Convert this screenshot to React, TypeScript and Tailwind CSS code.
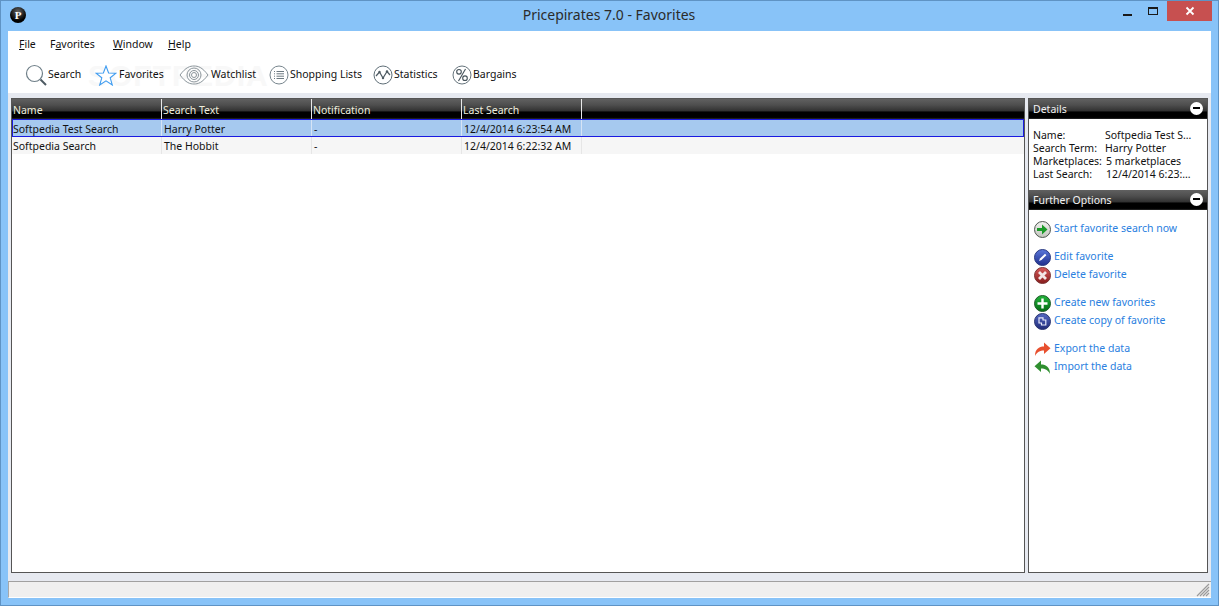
import type { ReactNode } from "react";

const font = "font-['Noto_Sans','Liberation_Sans',sans-serif]";

const headerBg = "bg-[linear-gradient(to_bottom,#606060_0%,#4e4e4e_30%,#333_58%,#000_66%,#000_92%,#2a2a2a_100%)]";

const columns = [
  { name: "Name", w: "w-[150px]" },
  { name: "Search Text", w: "w-[150px]" },
  { name: "Notification", w: "w-[150px]" },
  { name: "Last Search", w: "w-[120px]" },
];

const rows = [
  ["Softpedia Test Search", "Harry Potter", "-", "12/4/2014 6:23:54 AM"],
  ["Softpedia Search", "The Hobbit", "-", "12/4/2014 6:22:32 AM"],
];

const details = [
  ["Name:", "Softpedia Test Search", "w-[72px]", "w-[92px]"],
  ["Search Term:", "Harry Potter", "w-[72px]", "w-[92px]"],
  ["Marketplaces:", "5 marketplaces", "w-[73px]", "w-[92px]"],
  ["Last Search:", "12/4/2014 6:23:54 AM", "w-[73px]", "w-[89px]"],
];

function SearchIcon() {
  return (
    <svg width="22" height="23" viewBox="0 0 22 23" fill="none">
      <circle cx="9.5" cy="9.5" r="8" stroke="#6f7f88" strokeWidth="1.2" fill="#fff" />
      <path d="M15.5 15.5 L21 21" stroke="#4d5a62" strokeWidth="2" />
    </svg>
  );
}

function StarIcon() {
  return (
    <svg width="22" height="21" viewBox="0 0 22 21" fill="none">
      <path d="M11 1 L13.6 8 L21 8.2 L15.2 12.8 L17.3 20 L11 15.8 L4.7 20 L6.8 12.8 L1 8.2 L8.4 8 Z" stroke="#3f9cf0" strokeWidth="1.1" fill="#fff" />
    </svg>
  );
}

function EyeIcon() {
  return (
    <svg width="30" height="20" viewBox="0 0 30 20" fill="none">
      <path d="M1 10 C7 2 11 1 15 1 C19 1 23 2 29 10 C23 18 19 19 15 19 C11 19 7 18 1 10 Z" stroke="#8b959b" strokeWidth="1" />
      <circle cx="15" cy="10" r="7" stroke="#8b959b" strokeWidth="1" />
      <circle cx="15" cy="10" r="4.5" stroke="#8b959b" strokeWidth="1" />
      <circle cx="15" cy="10" r="2.5" stroke="#8b959b" strokeWidth="1" />
    </svg>
  );
}

function ListIcon() {
  return (
    <svg width="20" height="20" viewBox="0 0 20 20" fill="none">
      <circle cx="10" cy="10" r="9" stroke="#77858d" strokeWidth="1" />
      <path d="M7.5 6.5 H15 M7.5 8.8 H15 M7.5 11.2 H15 M7.5 13.5 H15" stroke="#6d7a82" strokeWidth="1" />
      <path d="M5 6.5 H6 M5 8.8 H6 M5 11.2 H6 M5 13.5 H6" stroke="#6d7a82" strokeWidth="1" />
    </svg>
  );
}

function StatsIcon() {
  return (
    <svg width="20" height="20" viewBox="0 0 20 20" fill="none">
      <circle cx="10" cy="10" r="9" stroke="#5f6e77" strokeWidth="1" />
      <path d="M3 11 L6.5 7 L10 13 L14 6.5 L17 10" stroke="#4d5a62" strokeWidth="1.2" />
      <circle cx="6.5" cy="7" r="1.2" fill="#4d5a62" />
      <circle cx="10" cy="13" r="1.2" fill="#4d5a62" />
      <circle cx="14" cy="6.5" r="1.2" fill="#4d5a62" />
    </svg>
  );
}

function PercentIcon() {
  return (
    <svg width="20" height="20" viewBox="0 0 20 20" fill="none">
      <circle cx="10" cy="10" r="9" stroke="#66747c" strokeWidth="1" />
      <circle cx="7" cy="6.8" r="2.3" stroke="#46535b" strokeWidth="1.1" />
      <circle cx="13" cy="13.2" r="2.3" stroke="#46535b" strokeWidth="1.1" />
      <path d="M13.5 4 L6.5 16" stroke="#46535b" strokeWidth="1.1" />
    </svg>
  );
}

function Ball({ from, to, ring, children }: { from: string; to: string; ring: string; children: ReactNode }) {
  const id = "b" + from.slice(1);
  return (
    <svg width="17" height="17" viewBox="0 0 17 17" fill="none" className="shrink-0">
      <defs>
        <linearGradient id={id} x1="0" y1="0" x2="0" y2="1">
          <stop offset="0" stopColor={from} />
          <stop offset="1" stopColor={to} />
        </linearGradient>
      </defs>
      <circle cx="8.5" cy="8.5" r="8" fill={`url(#${id})`} stroke={ring} strokeWidth="1" />
      {children}
    </svg>
  );
}

function ArrowBall() {
  return (
    <Ball from="#f2f2f0" to="#c2c5bd" ring="#4f5750">
      <path d="M3 7 H8 V3.5 L13.5 8.5 L8 13.5 V10 H3 Z" fill="#1a9a28" />
    </Ball>
  );
}

function EditBall() {
  return (
    <Ball from="#5b78dc" to="#1f2f8c" ring="#2b3a80">
      <path d="M5 12 L6 9.5 L11 4.8 L12.4 6.2 L7.5 11 Z" fill="#fff" />
    </Ball>
  );
}

function DeleteBall() {
  return (
    <Ball from="#d85a5a" to="#861c1c" ring="#7b3535">
      <path d="M5 5 L12 12 M12 5 L5 12" stroke="#f3e6e6" strokeWidth="2.8" />
    </Ball>
  );
}

function AddBall() {
  return (
    <Ball from="#22b53b" to="#056b15" ring="#1e5a28">
      <path d="M8.5 3.5 V13.5 M3.5 8.5 H13.5" stroke="#fff" strokeWidth="2.4" />
    </Ball>
  );
}

function CopyBall() {
  return (
    <Ball from="#5569c4" to="#1f2a78" ring="#2c3670">
      <path d="M5 4.8 H9 V7 H11.8 V12 H7.5 V10 H5 Z" fill="none" stroke="#e7eafa" strokeWidth="1.2" />
    </Ball>
  );
}

function ExportIcon() {
  return (
    <svg width="17" height="15" viewBox="0 0 17 15" className="shrink-0">
      <path d="M1 14 C1 7 5 4.5 10 4.5 V0.5 L16.5 6.3 L10 12 V8.5 C6 8.5 3 10 1 14 Z" fill="#e8502f" />
    </svg>
  );
}

function ImportIcon() {
  return (
    <svg width="17" height="15" viewBox="0 0 17 15" className="shrink-0">
      <path d="M16 14 C16 7 12 4.5 7 4.5 V0.5 L0.5 6.3 L7 12 V8.5 C11 8.5 14 10 16 14 Z" fill="#2f8f2f" />
    </svg>
  );
}

function Tool({ icon, label, className }: { icon: ReactNode; label: string; className: string }) {
  return (
    <div className={`flex items-center ${className}`}>
      {icon}
      <span className="text-[10.5px] text-[#111]">{label}</span>
    </div>
  );
}

function MenuItem({ before = "", mark, after, className }: { before?: string; mark: string; after: string; className: string }) {
  return (
    <span className={className}>
      {before}
      <span className="underline underline-offset-1">{mark}</span>
      {after}
    </span>
  );
}

function PanelHeader({ title }: { title: string }) {
  return (
    <div className={`h-5 shrink-0 flex items-center justify-between pl-[4px] pr-[4px] ${headerBg}`}>
      <span className="text-[10.5px] leading-[20px] text-[#f2f2f2] mt-[-1px]">{title}</span>
      <span className="w-[13px] h-[13px] rounded-full bg-white flex items-center justify-center mt-[-2px]">
        <span className="w-[7px] h-[2px] bg-black" />
      </span>
    </div>
  );
}

function Action({ icon, label, className = "" }: { icon: ReactNode; label: string; className?: string }) {
  return (
    <div className={`h-[18px] flex items-center gap-[3px] ${className}`}>
      <div className="w-[17px] flex justify-center">{icon}</div>
      <span className="text-[10.5px] text-[#2a80e0]">{label}</span>
    </div>
  );
}

export default function App() {
  return (
    <div className={`w-[1219px] h-[606px] overflow-hidden flex flex-col bg-[#88c3f8] border border-[#5f93c4] ${font}`}>
      {/* title bar */}
      <div className="h-[30px] shrink-0 flex items-start">
        <div className="w-[16px] h-[16px] ml-[9px] mt-[6px] rounded-full bg-[radial-gradient(circle_at_50%_30%,#666,#000_65%)] text-white text-[11px] leading-[16px] font-bold text-center font-['Liberation_Serif',serif]">
          P
        </div>
        <div className="flex-1 text-center text-[14px] leading-[20px] pt-[4px] pl-[78px] text-[#2b2b2b]">
          Pricepirates 7.0 - Favorites
        </div>
        <div className="flex items-start mr-[6px]">
          <div className="w-[26px] h-[19px] flex justify-center pt-[13px]">
            <span className="w-[9px] h-[2px] bg-[#1a1a1a]" />
          </div>
          <div className="w-[26px] h-[19px] flex justify-center pt-[6px] mr-[1px]">
            <span className="w-[10px] h-[8px] border border-t-2 border-[#1a1a1a]" />
          </div>
          <div className="w-[45px] h-[20px] bg-[#c75050] flex items-center justify-center">
            <svg width="10" height="10" viewBox="0 0 10 10">
              <path d="M1.5 1.5 L8.5 8.5 M8.5 1.5 L1.5 8.5" stroke="#fff" strokeWidth="1.8" />
            </svg>
          </div>
        </div>
      </div>

      {/* client area */}
      <div className="flex-1 min-h-0 mx-[7px] mb-[7px] flex flex-col bg-white relative">
        <div className="absolute left-[80px] top-[30px] text-[30px] leading-none font-bold tracking-[1px] text-[#f8f8f8] font-['Liberation_Sans',sans-serif]">
          SOFTPEDIA
        </div>

        <div className="h-[62px] shrink-0 relative">
          <div className="flex pl-[11px] pt-[5px] text-[10.5px] leading-[16px] text-[#111]">
            <MenuItem mark="F" after="ile" className="w-[31px]" />
            <MenuItem before="F" mark="a" after="vorites" className="w-[63px]" />
            <MenuItem mark="W" after="indow" className="w-[55px]" />
            <MenuItem mark="H" after="elp" className="w-[30px]" />
          </div>
          <div className="flex items-center h-[26px] pl-[17px] mt-[10px]">
            <Tool icon={<SearchIcon />} label="Search" className="w-[70px] gap-[1px]" />
            <Tool icon={<StarIcon />} label="Favorites" className="w-[84px] gap-[2px]" />
            <Tool icon={<EyeIcon />} label="Watchlist" className="w-[90px] gap-[2px]" />
            <Tool icon={<ListIcon />} label="Shopping Lists" className="w-[104px] gap-[1px]" />
            <Tool icon={<StatsIcon />} label="Statistics" className="w-[79px] gap-[1px]" />
            <Tool icon={<PercentIcon />} label="Bargains" className="w-[70px] gap-[1px]" />
          </div>
        </div>

        <div className="flex-1 min-h-0 bg-[#e6e9f0] flex gap-[3px] px-[3px] pt-[5px] pb-[8px]">
          {/* favorites table */}
          <div className="flex-1 bg-white border border-[#555]">
            <div className={`h-5 flex ${headerBg}`}>
              {columns.map((c) => (
                <div key={c.name} className={`${c.w} pl-[1px] pt-[1px] border-r border-[#e8e8e8] text-[10.5px] leading-[20px] text-[#eeeedd]`}>
                  {c.name}
                </div>
              ))}
            </div>
            {rows.map((row, i) => (
              <div
                key={row[0]}
                className={
                  i === 0
                    ? "h-[18px] flex bg-[#a6c9ef] border border-[#1a1ae0]"
                    : "h-[17px] flex"
                }
              >
                {row.map((cell, j) => (
                  <div
                    key={j}
                    className={`${i === 0 && j === 0 ? "w-[149px]" : columns[j].w} ${i === 1 && j === 0 ? "pl-[1px]" : ""} ${j > 0 ? "pl-[2px]" : ""} pt-[1px] border-r ${i === 0 ? "border-[#d6e4f6]" : "border-[#e6e6e6] bg-[#f6f6f6]"} text-[10.5px] leading-[16px] text-[#111]`}
                  >
                    {cell}
                  </div>
                ))}
                {i === 1 && <div className="flex-1 bg-[#f6f6f6]" />}
              </div>
            ))}
          </div>

          {/* side panel */}
          <div className="w-[180px] bg-white border border-[#555] flex flex-col">
            <PanelHeader title="Details" />
            <div className="h-[71px] shrink-0 pt-[10px] pl-[4px]">
              {details.map(([label, value, w, vw]) => (
                <div key={label} className="flex h-[13px] text-[10.5px] leading-[13px] text-[#111]">
                  <span className={`${w} shrink-0`}>{label}</span>
                  <span className={`${vw} truncate`}>{value}</span>
                </div>
              ))}
            </div>
            <PanelHeader title="Further Options" />
            <div className="pl-[5px] pt-[10px]">
              <Action icon={<ArrowBall />} label="Start favorite search now" />
              <Action icon={<EditBall />} label="Edit favorite" className="mt-[10px]" />
              <Action icon={<DeleteBall />} label="Delete favorite" />
              <Action icon={<AddBall />} label="Create new favorites" className="mt-[10px]" />
              <Action icon={<CopyBall />} label="Create copy of favorite" />
              <Action icon={<ExportIcon />} label="Export the data" className="mt-[10px]" />
              <Action icon={<ImportIcon />} label="Import the data" />
            </div>
          </div>
        </div>

        {/* status bar */}
        <div className="h-[17px] shrink-0 bg-[#efefef] border-t border-[#a0a0a0] border-l border-l-[#a8a8a8] border-b border-b-white flex justify-end items-end">
          <svg width="14" height="14" viewBox="0 0 14 14" className="mr-[1px]">
            <path d="M13 1 L1 13 M13 4 L4 13 M13 7 L7 13 M13 10 L10 13" stroke="#9a9a9a" strokeWidth="1.2" fill="none" />
          </svg>
        </div>
      </div>
    </div>
  );
}
